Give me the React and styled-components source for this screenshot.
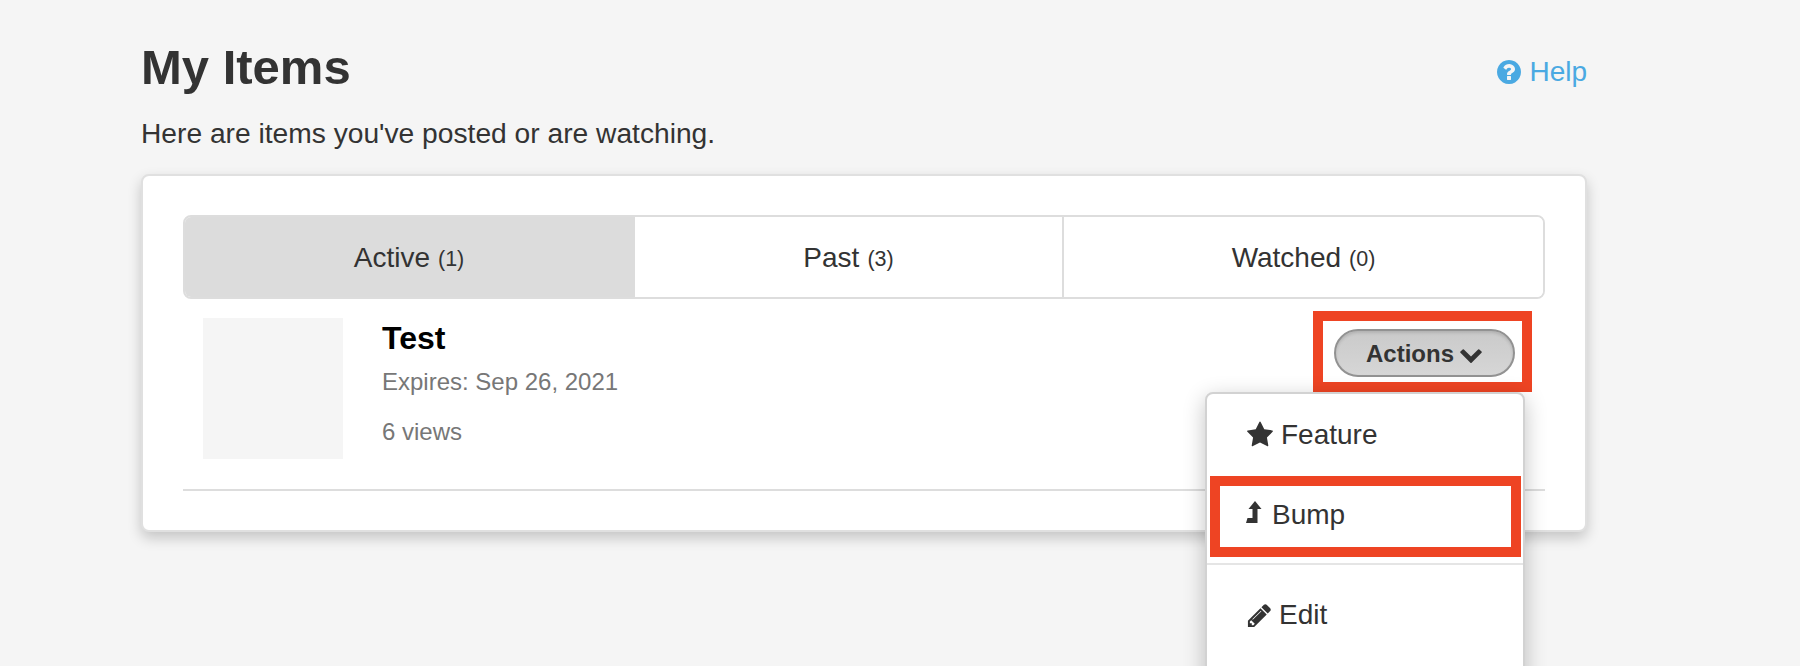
import React from 'react'
import styled, { createGlobalStyle } from 'styled-components'

const GlobalStyle = createGlobalStyle`
  html, body {
    margin: 0;
    height: 666px;
    overflow: hidden;
    background: #f5f5f5;
    font-family: "Liberation Sans", Arial, sans-serif;
    color: #333;
  }
`

const Page = styled.div`
  width: 1446px;
  margin-left: 141px;
  padding-top: 35px;
`

const Header = styled.header`
  display: flex;
  align-items: flex-start;
  justify-content: space-between;
`

const Title = styled.h1`
  margin: 0;
  font-size: 49px;
  line-height: 64px;
  font-weight: 700;
  color: #333;
`

const HelpLink = styled.a`
  display: flex;
  align-items: center;
  gap: 6px;
  margin-top: 17px;
  font-size: 28px;
  line-height: 40px;
  color: #4aa9e2;
`

const Intro = styled.p`
  margin: 14px 0 0;
  font-size: 28.2px;
  line-height: 40px;
`

const Card = styled.section`
  position: relative;
  box-sizing: border-box;
  height: 358px;
  margin-top: 21px;
  padding: 39px 40px 0;
  background: #fff;
  border: 2px solid #e0e0e0;
  border-radius: 8px;
  box-shadow: 0 6px 14px rgba(0, 0, 0, 0.2);
`

const Tabs = styled.div`
  display: grid;
  grid-template-columns: 450px 427px 1fr;
  height: 84px;
  box-sizing: border-box;
  border: 2px solid #ddd;
  border-radius: 8px;
  overflow: hidden;
`

const Tab = styled.div`
  display: flex;
  align-items: center;
  justify-content: center;
  gap: 8px;
  padding-top: 2px;
  font-size: 28px;
  margin: ${({ $active }) => ($active ? '-2px 0 -2px -2px' : '0')};
  background: ${({ $active }) => ($active ? '#dcdcdc' : '#fff')};
  border-left: ${({ $divider }) => ($divider ? '2px solid #ddd' : 'none')};
`

const Count = styled.small`
  font-size: 21.5px;
  margin-top: 3px;
`

const Row = styled.div`
  display: flex;
  height: 192px;
  box-sizing: border-box;
  padding: 19px 20px 0;
  border-bottom: 2px solid #ddd;
`

const Thumb = styled.div`
  flex: none;
  width: 140px;
  height: 141px;
  background: #f5f5f5;
`

const Info = styled.div`
  margin-left: 39px;
  padding-top: 2px;
`

const Name = styled.div`
  font-size: 32px;
  line-height: 36px;
  font-weight: 700;
  color: #000;
`

const Meta = styled.div`
  font-size: 24px;
  line-height: 30px;
  color: #777;
  margin-top: ${({ $gap }) => $gap}px;
`

const ActionsBox = styled.div`
  position: absolute;
  left: 1170px;
  top: 135px;
  width: 219px;
  height: 81px;
  box-sizing: border-box;
  border: 10px solid #ee4423;
`

const ActionsButton = styled.button`
  position: absolute;
  left: 11px;
  top: 8px;
  width: 181px;
  height: 48px;
  box-sizing: border-box;
  display: flex;
  align-items: center;
  justify-content: center;
  gap: 5px;
  padding: 2px 0 0;
  border: 2px solid #929292;
  border-radius: 24px;
  background: linear-gradient(#cacaca, #d6d6d6);
  box-shadow: inset 0 2px 3px rgba(0, 0, 0, 0.12);
  font-family: inherit;
  font-size: 24px;
  font-weight: 700;
  color: #333;
`

const Menu = styled.ul`
  position: absolute;
  left: 1062px;
  top: 216px;
  width: 320px;
  height: 400px;
  box-sizing: border-box;
  margin: 0;
  padding: 0;
  list-style: none;
  background: #fff;
  border: 2px solid #d2d2d2;
  border-radius: 8px;
  box-shadow: 0 6px 22px rgba(0, 0, 0, 0.24);
`

const MenuItem = styled.li`
  display: flex;
  align-items: center;
  gap: ${({ $gap }) => $gap}px;
  height: ${({ $height }) => $height}px;
  box-sizing: border-box;
  padding-left: 39px;
  padding-bottom: ${({ $after }) => $after || 0}px;
  font-size: 28px;
  color: #333;
  svg {
    flex: none;
  }
`

const BumpBox = styled.div`
  position: absolute;
  left: 3px;
  top: 82px;
  width: 311px;
  height: 81px;
  box-sizing: border-box;
  border: 10px solid #ee4423;
`

const MenuDivider = styled.div`
  height: 2px;
  background: #e5e5e5;
`

const BumpSvg = styled.svg`
  margin-bottom: 6px;
`

const Glyph = ({ d, size }) => (
  <svg width={size} height={size} viewBox="0 0 1792 1792" fill="currentColor">
    <path d={d} />
  </svg>
)

const STAR =
  'M1728 647q0 22-26 48l-363 354 86 500q1 7 1 20 0 21-10.500 35.500t-30.500 14.500q-19 0-40-12l-449-236-449 236q-22 12-40 12-21 0-31.500-14.500t-10.500-35.500q0-6 2-20l86-500-364-354q-25-27-25-48 0-37 56-46l502-73 225-455q19-41 49-41t49 41l225 455 502 73q56 9 56 46z'
const CHEVRON =
  'M1683 808l-742 741q-19 19-45 19t-45-19l-742-741q-19-19-19-45.500t19-45.500l166-165q19-19 45-19t45 19l531 531 531-531q19-19 45-19t45 19l166 165q19 19 19 45.500t-19 45.500z'
const PENCIL =
  'M491 1536l91-91-235-235-91 91v107h128v128h107zm523-928q0-22-22-22-10 0-17 7l-542 542q-7 7-7 17 0 22 22 22 10 0 17-7l542-542q7-7 7-17zm-54-192l416 416-832 832h-416v-416zm683 96q0 53-37 90l-166 166-416-416 166-165q36-38 90-38 53 0 91 38l235 234q37 39 37 91z'
const QUESTION =
  'M1024 1376v-192q0-14-9-23t-23-9h-192q-14 0-23 9t-9 23v192q0 14 9 23t23 9h192q14 0 23-9t9-23zm256-672q0-88-55.500-163t-138.500-116-170-41q-243 0-371 213-15 24 8 42l132 100q7 6 19 6 16 0 25-12 53-68 86-92 34-24 86-24 48 0 85.500 26t37.500 59q0 38-20 61t-68 45q-63 28-115.500 86.500t-52.500 125.500v36q0 14 9 23t23 9h192q14 0 23-9t9-23q0-19 21.500-49.500t54.500-49.500q32-18 49-28.500t46-35 44.500-48 28-60.500 12.500-81zm384 192q0 209-103 385.500t-279.500 279.500-385.500 103-385.500-103-279.500-279.500-103-385.500 103-385.500 279.500-279.500 385.500-103 385.500 103 279.500 279.500 103 385.500z'

const BumpIcon = () => (
  <BumpSvg width="16" height="22" viewBox="0 0 16 22" fill="#333">
    <path d="M9 0l6.500 8h-4v14H0l1.500-5h5V8h-4z" />
  </BumpSvg>
)

export default function App() {
  return (
    <Page>
      <GlobalStyle />
      <Header>
        <Title>My Items</Title>
        <HelpLink>
          <Glyph d={QUESTION} size={28} />
          Help
        </HelpLink>
      </Header>
      <Intro>Here are items you've posted or are watching.</Intro>
      <Card>
        <Tabs>
          <Tab $active>
            Active <Count>(1)</Count>
          </Tab>
          <Tab>
            Past <Count>(3)</Count>
          </Tab>
          <Tab $divider>
            Watched <Count>(0)</Count>
          </Tab>
        </Tabs>
        <Row>
          <Thumb />
          <Info>
            <Name>Test</Name>
            <Meta $gap={11}>Expires: Sep 26, 2021</Meta>
            <Meta $gap={20}>6 views</Meta>
          </Info>
        </Row>
        <ActionsBox>
          <ActionsButton>
            Actions <Glyph d={CHEVRON} size={24} />
          </ActionsButton>
        </ActionsBox>
        <Menu>
          <MenuItem $height={82} $gap={7}>
            <Glyph d={STAR} size={28} />
            Feature
          </MenuItem>
          <MenuItem $height={87} $after={10} $gap={10}>
            <BumpIcon />
            Bump
          </MenuItem>
          <MenuDivider />
          <MenuItem $height={100} $gap={6}>
            <Glyph d={PENCIL} size={27} />
            Edit
          </MenuItem>
          <BumpBox />
        </Menu>
      </Card>
    </Page>
  )
}
